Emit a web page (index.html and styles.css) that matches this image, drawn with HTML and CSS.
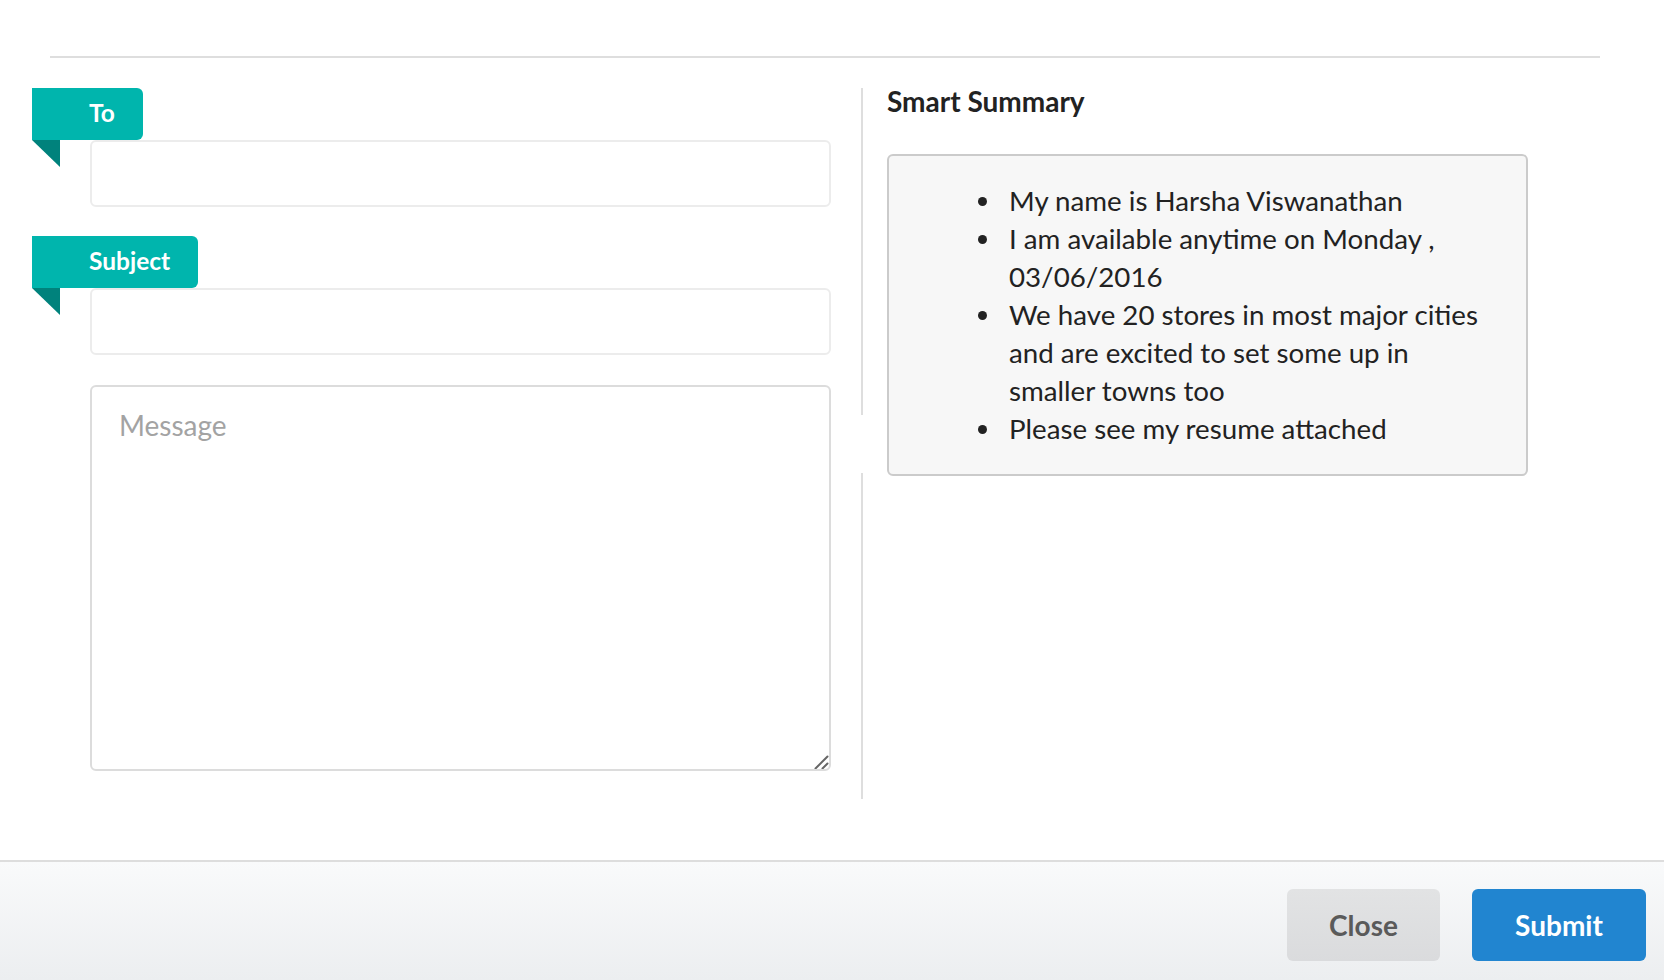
FILE: index.html
```html
<!DOCTYPE html>
<html lang="en">
<head>
<meta charset="utf-8">
<title>Compose</title>
<link rel="stylesheet" href="styles.css">
</head>
<body>
<div class="modal">
  <div class="rule"></div>
  <div class="content">
    <div class="form-col">
      <div class="field">
        <label class="tag">To</label>
        <input class="text-input" type="text">
      </div>
      <div class="field">
        <label class="tag">Subject</label>
        <input class="text-input" type="text">
      </div>
      <textarea class="message" placeholder="Message"></textarea>
    </div>
    <div class="divider">
      <div class="divider-line"></div>
      <div class="divider-line"></div>
    </div>
    <div class="summary-col">
      <h2 class="summary-title">Smart Summary</h2>
      <div class="summary-box">
        <ul class="summary-list">
          <li>My name is Harsha Viswanathan</li>
          <li>I am available anytime on Monday , 03/06/2016</li>
          <li>We have 20 stores in most major cities and are excited to set some up in smaller towns too</li>
          <li>Please see my resume attached</li>
        </ul>
      </div>
    </div>
  </div>
  <div class="actions">
    <button class="btn btn-close" type="button">Close</button>
    <button class="btn btn-submit" type="button">Submit</button>
  </div>
</div>
</body>
</html>
```

FILE: styles.css
```css
* { box-sizing: border-box; }

html, body {
  margin: 0;
  padding: 0;
  background: #ffffff;
  font-family: Lato, "Open Sans", "Liberation Sans", sans-serif;
  color: rgba(0, 0, 0, 0.87);
}

.modal {
  height: 980px;
  display: flex;
  flex-direction: column;
}

.rule {
  height: 2px;
  background: #dedede;
  margin: 56px 64px 0 50px;
}

.content {
  display: flex;
  padding: 30px 0 0 32px;
}

.form-col {
  width: 799px;
  padding-bottom: 28px;
  display: flex;
  flex-direction: column;
}

.field {
  display: flex;
  flex-direction: column;
  align-items: flex-start;
}

.field + .field { margin-top: 29px; }

.tag {
  position: relative;
  height: 52px;
  line-height: 49px;
  padding: 0 28px 0 57px;
  background: #00b5ad;
  color: #ffffff;
  font-weight: 700;
  font-size: 24.5px;
  border-radius: 0 6px 6px 0;
}

.tag::after {
  content: "";
  position: absolute;
  top: 100%;
  left: 0;
  width: 0;
  height: 0;
  border-top: 27px solid #00827c;
  border-left: 28px solid transparent;
}

.text-input {
  margin-left: 58px;
  width: 741px;
  height: 67px;
  border: 2px solid #ececec;
  border-radius: 6px;
  background: #ffffff;
  font-family: inherit;
  font-size: 26px;
  padding: 0 26px;
  outline: none;
}

.message {
  margin-top: 30px;
  margin-left: 58px;
  width: 741px;
  height: 386px;
  border: 2px solid #dcdcdc;
  border-radius: 6px;
  background: #ffffff;
  font-family: inherit;
  font-size: 28px;
  line-height: 34px;
  padding: 21px 27px;
  color: rgba(0, 0, 0, 0.87);
  resize: vertical;
  outline: none;
}

.message::placeholder { color: #a3a3a3; }

.message::-webkit-scrollbar {
  width: 16px;
  height: 16px;
}

.message::-webkit-resizer {
  background: transparent url("data:image/svg+xml,%3Csvg xmlns='http://www.w3.org/2000/svg' width='16' height='16'%3E%3Cpath d='M2 15 L14 3 M9 15 L14 10' stroke='%23666' stroke-width='2' stroke-linecap='round' fill='none'/%3E%3C/svg%3E") no-repeat center;
}

.divider {
  width: 2px;
  margin: 0 24px 0 30px;
  display: flex;
  flex-direction: column;
  gap: 58px;
}

.divider-line {
  flex: 1;
  background: #dedede;
}

.summary-col {
  width: 641px;
}

.summary-title {
  margin: 0;
  height: 30px;
  line-height: 26px;
  font-size: 28px;
  font-weight: 700;
  color: #222222;
}

.summary-box {
  margin-top: 36px;
  height: 322px;
  background: #f7f7f7;
  border: 2px solid #cbcbcb;
  border-radius: 6px;
  padding: 26px 40px 0 0;
}

.summary-list {
  margin: 0;
  padding-left: 114px;
  font-size: 27.7px;
  line-height: 38px;
  color: #222222;
}

.summary-list li {
  padding-left: 6px;
}

.actions {
  margin-top: auto;
  height: 120px;
  border-top: 2px solid #dddddd;
  background: linear-gradient(#f9fafb, #eceef0);
  display: flex;
  justify-content: flex-end;
  align-items: flex-start;
  gap: 32px;
  padding: 27px 18px 0 0;
}

.btn {
  height: 72px;
  border: none;
  border-radius: 6px;
  padding: 0 42px;
  font-family: inherit;
  font-size: 28px;
  font-weight: 700;
  cursor: pointer;
}

.btn-close {
  width: 153px;
  background: linear-gradient(#e2e3e4, #dadbdd);
  color: #5a5a5a;
}

.btn-submit {
  width: 174px;
  background: #2185d0;
  color: #ffffff;
}
```
